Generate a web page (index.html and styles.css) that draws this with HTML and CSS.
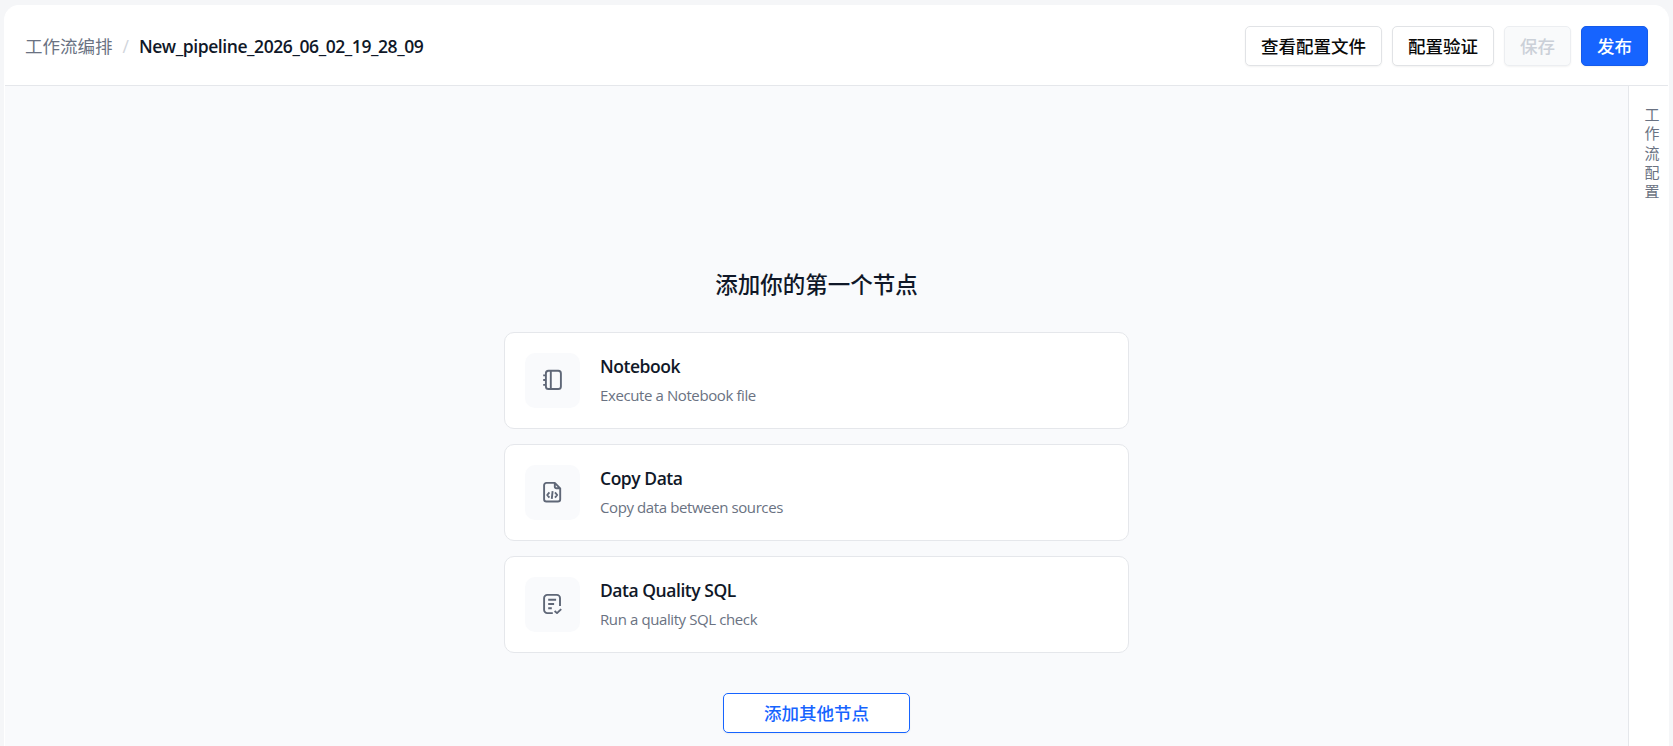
FILE: index.html
```html
<!DOCTYPE html>
<html lang="zh-CN">
<head>
  <meta charset="UTF-8" />
  <meta name="viewport" content="width=device-width, initial-scale=1.0"/>
  <title>工作流编排</title>
  <link rel="stylesheet" href="styles.css">
</head>
<body>
  <div class="panel">

    <!-- Top bar -->
    <header class="top-bar">
      <nav class="breadcrumb">
        <a class="crumb">工作流编排</a>
        <span class="slash">/</span>
        <span class="current">New_pipeline_2026_06_02_19_28_09</span>
      </nav>
      <div class="actions">
        <button class="btn">查看配置文件</button>
        <button class="btn">配置验证</button>
        <button class="btn" disabled>保存</button>
        <button class="btn btn-primary">发布</button>
      </div>
    </header>

    <div class="workspace">
      <!-- Empty canvas -->
      <main class="canvas">
        <h1>添加你的第一个节点</h1>
        <div class="node-list">
          <div class="node-card">
            <div class="node-icon">
              <svg viewBox="0 0 25 25">
                <rect x="5.9" y="2.8" width="15" height="18.2" rx="2.6"/>
                <path d="M10.8 2.8V21M3.2 7.4h2.7M3.2 12h2.7M3.2 16.9h2.7"/>
              </svg>
            </div>
            <div class="node-text">
              <h2>Notebook</h2>
              <p>Execute a Notebook file</p>
            </div>
          </div>
          <div class="node-card">
            <div class="node-icon">
              <svg viewBox="0 0 25 25">
                <path d="M14.8 2.9H6.4a2.3 2.3 0 0 0-2.3 2.3v14a2.3 2.3 0 0 0 2.3 2.3h11.5a2.3 2.3 0 0 0 2.3-2.3V8.3zM14.8 2.9v3.9a1.5 1.5 0 0 0 1.5 1.5h3.9"/>
                <path d="M9.4 12.4L7.2 15l2.2 2.6M15 12.4l2.2 2.6-2.2 2.6M12.6 11.2l-.8 7.6"/>
              </svg>
            </div>
            <div class="node-text">
              <h2>Copy Data</h2>
              <p>Copy data between sources</p>
            </div>
          </div>
          <div class="node-card">
            <div class="node-icon">
              <svg viewBox="0 0 25 25">
                <path d="M12.8 21.1H7.3a3.2 3.2 0 0 1-3.2-3.2V6.1a3.2 3.2 0 0 1 3.2-3.2h9.5A3.2 3.2 0 0 1 20 6.1v8"/>
                <path d="M8.2 7.7h7.9M8.2 12h5.9M8.2 16.3h3.6M14.6 19l2.4 2.1 4.2-4"/>
              </svg>
            </div>
            <div class="node-text">
              <h2>Data Quality SQL</h2>
              <p>Run a quality SQL check</p>
            </div>
          </div>
        </div>
        <button class="btn btn-outline">添加其他节点</button>
      </main>

      <!-- Collapsed settings tab -->
      <aside class="side-tab"><span>工作流配置</span></aside>
    </div>
  </div>
</body>
</html>
```
FILE: styles.css
```css
* {
  box-sizing: border-box;
  margin: 0;
  padding: 0;
}

body {
  height: 100vh;
  padding: 5px 4px 0;
  overflow: hidden;
  background: #f5f6f8;
  color: #101828;
  font-family: "Open Sans", "Noto Sans CJK SC", sans-serif;
  font-size: 17.5px;
}

.panel {
  display: flex;
  flex-direction: column;
  height: 100%;
  background: #fff;
  border: 1px solid #fff;
  border-bottom: none;
  border-radius: 15px 15px 0 0;
  overflow: hidden;
}

/* Top bar */
.top-bar {
  display: flex;
  justify-content: space-between;
  align-items: center;
  height: 80px;
  padding: 0 20px;
  border-bottom: 1px solid #e5e7eb;
}

.breadcrumb {
  display: flex;
  align-items: center;
  gap: 10px;
  line-height: 26px;
}

.crumb {
  color: #6a7282;
}

.slash {
  color: #d1d5dc;
}

.current {
  font-weight: 600;
  letter-spacing: -0.42px;
}

.actions {
  display: flex;
  gap: 10px;
}

.btn {
  height: 40px;
  padding: 0 15px;
  background: #fff;
  color: #0a0a0a;
  border: 1px solid #e1e3e6;
  border-radius: 5px;
  box-shadow: 0 1px 2px rgba(0, 0, 0, 0.05);
  font-family: "Noto Sans CJK SC", sans-serif;
  font-size: 17.5px;
  font-weight: 500;
  line-height: 26px;
}

.btn:disabled {
  background: #f9fafb;
  color: #cbd0d8;
  border-color: #eceef1;
}

.btn-primary {
  background: #1664ff;
  color: #fff;
  border-color: #155bea;
}

.btn-outline {
  width: 187px;
  color: #1664ff;
  border-color: #1664ff;
}

/* Canvas */
.workspace {
  display: flex;
  flex: 1;
}

.canvas {
  flex: 1;
  display: flex;
  flex-direction: column;
  align-items: center;
  padding-top: 181px;
  background: #f9fafc;
}

h1 {
  font-size: 22.5px;
  font-weight: 500;
  line-height: 35px;
}

.node-list {
  display: flex;
  flex-direction: column;
  gap: 15px;
  width: 625px;
  margin: 30px 0 40px;
}

.node-card {
  display: flex;
  align-items: center;
  gap: 20px;
  height: 97px;
  padding: 0 20px;
  background: #fff;
  border: 1px solid #e5e7eb;
  border-radius: 10px;
}

.node-icon {
  display: flex;
  align-items: center;
  justify-content: center;
  width: 55px;
  height: 55px;
  background: #f9fafc;
  border-radius: 10px;
}

.node-icon svg {
  width: 25px;
  height: 25px;
  fill: none;
  stroke: #5f6777;
  stroke-width: 1.9;
  stroke-linejoin: round;
}

.node-text {
  padding-bottom: 2px;
}

.node-text h2 {
  font-size: 17.5px;
  font-weight: 600;
  line-height: 26px;
  letter-spacing: -0.46px;
}

.node-text p {
  margin-top: 5px;
  color: #6a7282;
  font-size: 15px;
  line-height: 23px;
  letter-spacing: -0.4px;
}

/* Settings tab */
.side-tab {
  display: flex;
  justify-content: center;
  width: 40px;
  padding-top: 18px;
  border-left: 1px solid #e5e7eb;
}

.side-tab span {
  width: 15px;
  margin-left: 7px;
  color: #6a7282;
  font-family: "Noto Sans CJK SC", sans-serif;
  font-size: 15px;
  line-height: 19.3px;
}
```
